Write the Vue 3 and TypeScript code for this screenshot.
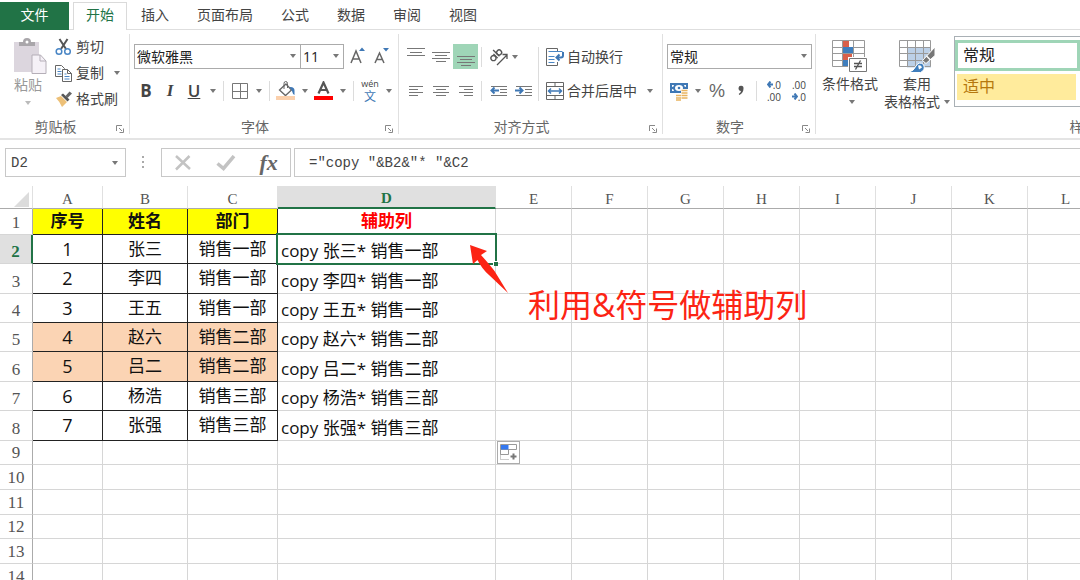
<script setup lang="ts">
import { ref } from 'vue'

interface Column { name: string; width: number }
interface Row { n: number; height: number; cells: string[]; highlight?: boolean }

const tabs: string[] = ['开始', '插入', '页面布局', '公式', '数据', '审阅', '视图']
const activeTab = ref('开始')
const cellName = ref('D2')
const formula = ref('="copy "&B2&"* "&C2')

const columns: Column[] = [
  { name: 'A', width: 70 },
  { name: 'B', width: 85 },
  { name: 'C', width: 90 },
  { name: 'D', width: 218 },
  ...['E', 'F', 'G', 'H', 'I', 'J', 'K', 'L'].map((name) => ({ name, width: 76 })),
]

const person = (no: string, name: string, dept: string): string[] => [no, name, dept, `copy ${name}* ${dept}`]

const rows: Row[] = [
  { n: 1, height: 26, cells: ['序号', '姓名', '部门', '辅助列'] },
  { n: 2, height: 29, cells: person('1', '张三', '销售一部') },
  { n: 3, height: 30, cells: person('2', '李四', '销售一部') },
  { n: 4, height: 29, cells: person('3', '王五', '销售一部') },
  { n: 5, height: 29, cells: person('4', '赵六', '销售二部'), highlight: true },
  { n: 6, height: 30, cells: person('5', '吕二', '销售二部'), highlight: true },
  { n: 7, height: 29, cells: person('6', '杨浩', '销售三部') },
  { n: 8, height: 30, cells: person('7', '张强', '销售三部') },
  { n: 9, height: 24, cells: [] },
  { n: 10, height: 25, cells: [] },
  { n: 11, height: 25, cells: [] },
  { n: 12, height: 24, cells: [] },
  { n: 13, height: 25, cells: [] },
  { n: 14, height: 25, cells: [] },
]

function cellClass(row: Row, c: number): Record<string, boolean> {
  return {
    boxed: row.n <= 8 && c < 3,
    title: row.n === 1 && c < 3,
    helper: row.n === 1 && c === 3,
    digit: row.n > 1 && c === 0,
    copy: row.n > 1 && c === 3,
    peach: !!row.highlight && c < 3,
    selected: row.n === 2 && c === 3,
  }
}
</script>

<template>
  <div class="app">
    <nav class="tabs">
      <button class="tab file">文件</button>
      <button
        v-for="t in tabs"
        :key="t"
        class="tab"
        :class="{ active: t === activeTab }"
        @click="activeTab = t"
      >{{ t }}</button>
    </nav>

    <div class="ribbon">
      <section class="group clipboard">
        <div class="body">
          <button class="big paste">
            <svg width="34" height="38" viewBox="0 0 34 38">
              <rect x="1" y="4" width="25" height="30" fill="#dcd6de" />
              <path d="M6 8V4h4q0-4 4-4t4 4h4v4z" fill="#a9a6aa" />
              <circle cx="14" cy="4" r="1.5" fill="#fff" />
              <path d="M19 17h8.500l5.500 6v12.500H19z" fill="#f5f1f7" stroke="#b5afb8" />
              <path d="M27 17v6h6" fill="none" stroke="#b5afb8" />
            </svg>
            <span>粘贴</span>
            <i class="caret"></i>
          </button>
          <div class="stack">
            <button class="item">
              <svg width="18" height="18" viewBox="0 0 18 18">
                <path d="M4.500 1l6.500 10M12.500 1L6 11" stroke="#555" stroke-width="2" fill="none" />
                <circle cx="4" cy="13.500" r="2.800" fill="none" stroke="#4a86c5" stroke-width="1.500" />
                <circle cx="12.500" cy="13.500" r="2.800" fill="none" stroke="#4a86c5" stroke-width="1.500" />
              </svg>
              <span>剪切</span>
            </button>
            <button class="item">
              <svg width="18" height="18" viewBox="0 0 18 18">
                <path d="M.5 1.500h6l3 3v8h-9z" fill="#fff" stroke="#666" />
                <path d="M2.500 5h3M2.500 7.500h4M2.500 10h4" stroke="#4a86c5" />
                <path d="M7.500 5.500h5l4 4v8h-9z" fill="#fff" stroke="#666" />
                <path d="M12.500 5.500v4h4" fill="none" stroke="#666" />
                <path d="M9.500 10h2M9.500 12.500h5M9.500 15h5" stroke="#4a86c5" />
              </svg>
              <span>复制</span>
              <i class="caret"></i>
            </button>
            <button class="item">
              <svg width="18" height="18" viewBox="0 0 18 18">
                <path d="M1 8l5-2 6 6-5 5q-2-5-6-9z" fill="#edc078" />
                <path d="M6 5l2-1.500 6.500 6-2 2z" fill="#555" />
                <path d="M10.500 6l4-4.500 2.500 2-4.500 4.500z" fill="#666" />
              </svg>
              <span>格式刷</span>
            </button>
          </div>
        </div>
        <footer>剪贴板<svg class="launch" viewBox="0 0 8 8"><path d="M.5 6V.5H6M3 3l3 3M7.500 3.500v4h-4" /></svg></footer>
      </section>

      <section class="group font">
        <div class="body rows">
          <div class="line">
            <label class="combo family"><select aria-label="字体"><option>微软雅黑</option></select><i class="caret"></i></label>
            <label class="combo size"><select aria-label="字号"><option>11</option></select><i class="caret"></i></label>
            <button class="tool grow" aria-label="增大字号">
              <svg width="24" height="24" viewBox="0 0 24 24"><path d="M5 18l5-12 5 12M7 14h6" class="glyph" /><path d="M13 6l3-3.500L19 6z" fill="#3f78b5" /></svg>
            </button>
            <button class="tool" aria-label="减小字号">
              <svg width="24" height="24" viewBox="0 0 24 24"><path d="M5 18l4.500-10L14 18M7 14.500h5" class="glyph" /><path d="M13 3l3 3.500L19 3z" fill="#3f78b5" /></svg>
            </button>
          </div>
          <div class="line">
            <button class="tool letter"><b>B</b></button>
            <button class="tool letter italic">I</button>
            <button class="tool letter"><u>U</u></button>
            <button class="drop" aria-label="下划线选项"><i class="caret"></i></button>
            <i class="sep"></i>
            <button class="tool" aria-label="边框">
              <svg width="18" height="18" viewBox="0 0 18 18"><path d="M1.500 1.500h15v15h-15zM9.500 1.500v15M1.500 9.500h15" fill="none" stroke="#777" /></svg>
            </button>
            <button class="drop" aria-label="边框选项"><i class="caret"></i></button>
            <i class="sep"></i>
            <button class="tool" aria-label="填充颜色">
              <svg width="20" height="20" viewBox="0 0 20 20">
                <path d="M3.500 9L10 3l5.500 6-6 5.500z" fill="#fff" stroke="#666" stroke-width="1.300" />
                <path d="M8 8V2.500Q8 .5 9.700.5t1.800 2V7" fill="none" stroke="#666" />
                <path d="M13.500 6q5-.5 5 3.500v4.500q-2-1-2.500-4z" fill="#3f78b5" />
                <rect y="15" width="19" height="4" fill="#fbd0ac" />
              </svg>
            </button>
            <button class="drop" aria-label="填充颜色选项"><i class="caret"></i></button>
            <button class="tool" aria-label="字体颜色">
              <svg width="20" height="20" viewBox="0 0 20 20"><path d="M4.500 12.500l5-11 5 11M6.500 9h6" fill="none" stroke="#555" stroke-width="2.200" /><rect y="15" width="19" height="4" fill="#f00" /></svg>
            </button>
            <button class="drop" aria-label="字体颜色选项"><i class="caret"></i></button>
            <i class="sep"></i>
            <button class="tool phonetic"><span>wén</span><span class="han">文</span></button>
            <button class="drop" aria-label="拼音选项"><i class="caret"></i></button>
          </div>
        </div>
        <footer>字体<svg class="launch" viewBox="0 0 8 8"><path d="M.5 6V.5H6M3 3l3 3M7.500 3.500v4h-4" /></svg></footer>
      </section>

      <section class="group align">
        <div class="body">
          <div class="rows">
            <div class="line">
              <button class="cell" aria-label="顶端对齐"><svg width="18" height="18" viewBox="0 0 18 18"><path d="M0 .5h18M3 4.500h12M0 7.500h18" class="bars" /></svg></button>
              <button class="cell" aria-label="垂直居中"><svg width="18" height="18" viewBox="0 0 18 18"><path d="M0 4.500h18M3 7.500h12M0 10.500h18M4 13.500h10" class="bars" /></svg></button>
              <button class="cell on" aria-label="底端对齐"><svg width="18" height="18" viewBox="0 0 18 18"><path d="M0 8.500h18M3 11.500h12M0 14.500h18M4 17.500h10" class="bars" /></svg></button>
              <i class="sep"></i>
              <button class="cell" aria-label="方向">
                <svg width="20" height="20" viewBox="0 0 20 20">
                  <g transform="rotate(-45 8 9)" fill="none" stroke="#555" stroke-width="1.400"><circle cx="4" cy="8" r="2.500" /><path d="M7 5v6M9.500 2V11" /><circle cx="12" cy="8" r="2.500" /></g>
                  <path d="M8 18l10-10M13.500 7.500H18v4.500" fill="none" stroke="#555" stroke-width="1.300" />
                </svg>
              </button>
              <button class="drop near" aria-label="方向选项"><i class="caret"></i></button>
            </div>
            <div class="line">
              <button class="cell" aria-label="左对齐"><svg width="14" height="12" viewBox="0 0 14 12"><path d="M0 1.500h14M0 4.500h9M0 7.500h14M0 10.500h9" class="bars" /></svg></button>
              <button class="cell" aria-label="居中"><svg width="16" height="12" viewBox="0 0 16 12"><path d="M0 1.500h16M3 4.500h10M0 7.500h16M3 10.500h10" class="bars" /></svg></button>
              <button class="cell" aria-label="右对齐"><svg width="14" height="12" viewBox="0 0 14 12"><path d="M0 1.500h14M5 4.500h9M0 7.500h14M5 10.500h9" class="bars" /></svg></button>
              <i class="sep"></i>
              <button class="cell" aria-label="减少缩进"><svg width="18" height="12" viewBox="0 0 18 12"><path d="M1 1.500h16M10 4.500h7M10 7.500h7M1 10.500h16" class="bars" /><path d="M4.500 2.500L1.500 5.500l3 3M1.500 5.500H9" class="arrow" /></svg></button>
              <button class="cell" aria-label="增加缩进"><svg width="18" height="12" viewBox="0 0 18 12"><path d="M1 1.500h16M10 4.500h7M10 7.500h7M1 10.500h16" class="bars" /><path d="M4.500 2.500l3 3-3 3M7.500 5.500H0" class="arrow" /></svg></button>
            </div>
          </div>
          <i class="rule"></i>
          <div class="rows">
            <div class="line">
              <button class="item">
                <svg width="18" height="18" viewBox="0 0 18 18">
                  <path d="M11.500 3v-2.500h-11v17h11V14" fill="none" stroke="#666" />
                  <path d="M2.500 3.500h14M2.500 8.500h6M2.500 11.500h6M2.500 14.500h6" stroke="#4a86c5" />
                  <path d="M17 4v3.500q0 2-2 2h-4M13.500 6.500l-3 3 3 3" fill="none" stroke="#3f78b5" stroke-width="2" />
                </svg>
                <span>自动换行</span>
              </button>
            </div>
            <div class="line">
              <button class="item">
                <svg width="18" height="18" viewBox="0 0 18 18">
                  <path d="M.5.5h17v17H.5zM.5 4.500h17M.5 13.500h17M9 .5v4M9 13.500v4" fill="none" stroke="#666" />
                  <path d="M5 6.500L2.500 9 5 11.500M13 6.500L15.500 9 13 11.500M2.500 9h13" fill="none" stroke="#3f78b5" stroke-width="1.500" />
                </svg>
                <span>合并后居中</span>
                <i class="caret"></i>
              </button>
            </div>
          </div>
        </div>
        <footer>对齐方式<svg class="launch" viewBox="0 0 8 8"><path d="M.5 6V.5H6M3 3l3 3M7.500 3.500v4h-4" /></svg></footer>
      </section>

      <section class="group number">
        <div class="body rows">
          <div class="line">
            <label class="combo format"><select aria-label="数字格式"><option>常规</option></select><i class="caret"></i></label>
          </div>
          <div class="line">
            <button class="tool" aria-label="会计数字格式">
              <svg width="20" height="20" viewBox="0 0 20 20">
                <path d="M1 2h18v10H1z" fill="#3f78b5" />
                <path d="M3 4h2q0 2-2 2zM17 4h-2q0 2 2 2zM3 10h2q0-2-2-2z" fill="#fff" />
                <ellipse cx="10" cy="7" rx="4" ry="3" fill="#fff" /><circle cx="10" cy="7" r="1.300" fill="#3f78b5" />
                <path d="M12 8h7v10h-5v1.500H6.500V14H12z" fill="#fff" />
                <path d="M12.500 9.500h6M12.500 12h6M12.500 14.500h6M12.500 17h6M7 14.500h5M7 17h5M7 19h5" stroke="#e9b45f" stroke-width="1.700" />
              </svg>
            </button>
            <button class="drop" aria-label="货币选项"><i class="caret"></i></button>
            <button class="tool percent">%</button>
            <button class="tool" aria-label="千位分隔样式"><svg width="8" height="12" viewBox="0 0 8 12"><path d="M1.500 3a2.500 2.500 0 1 1 5 .5q0 4-4 6.500l-.8-1Q4 7.500 4 6Q1.500 6 1.500 3z" fill="#555" /></svg></button>
            <i class="sep"></i>
            <button class="cell decimal"><span><svg width="6" height="7" viewBox="0 0 6 7"><path d="M3.500.5L1 3.500l2.500 3M1 3.500h5" class="arrow" /></svg>.0</span><span>.00</span></button>
            <button class="cell decimal"><span>.00</span><span><svg width="6" height="7" viewBox="0 0 6 7"><path d="M2.500.5L5 3.500l-2.500 3M5 3.500H0" class="arrow" /></svg>.0</span></button>
          </div>
        </div>
        <footer>数字<svg class="launch" viewBox="0 0 8 8"><path d="M.5 6V.5H6M3 3l3 3M7.500 3.500v4h-4" /></svg></footer>
      </section>

      <section class="group styles">
        <div class="body">
          <button class="big cond">
            <svg width="36" height="33" viewBox="0 0 36 33">
              <path d="M.5.500h32v26H.5z" fill="#fff" />
              <path d="M.5.500h32v26H.5zM.5 7.500h32M.5 13.500h32M.5 20.500h32M10.500.5v26M21.500.5v26" fill="none" stroke="#999" />
              <path d="M11 1h6v6h-6zM11 14h9v6h-9z" fill="#d9604a" />
              <path d="M11 7h10v6H11zM11 20h5v6h-5z" fill="#3f7ebd" />
              <path d="M16 17h20v16H16z" fill="#fff" />
              <path d="M17.500 18.500h17v13h-17z" fill="#fff" stroke="#777" />
              <path d="M22 23.500h8M22 26.500h8M28.500 20.500l-5 9" fill="none" stroke="#555" stroke-width="1.300" />
            </svg>
            <span>条件格式</span>
            <i class="caret"></i>
          </button>
          <button class="big fmt">
            <svg width="36" height="33" viewBox="0 0 36 33">
              <path d="M.5.5h31v26H.5z" fill="#fff" />
              <path d="M8 7.500h24v20H8z" fill="#bcd0e7" />
              <path d="M.5.500h31v26H.5zM.5 7.500h31M.5 13.500h31M.5 20.500h31M8.500.5v26M16.500.5v26M24.500.5v26" fill="none" stroke="#999" />
              <path d="M36 7v8.500L27 23.500l-3.500-3z" fill="#777" stroke="#fff" />
              <path d="M27.500 16l4 4" stroke="#fff" stroke-width="1.500" />
              <path d="M9 32.500q6-1.500 8-6.500 3-5 7.500-1.500 2.500 5.500-3 8z" fill="#3f7ebd" stroke="#fff" />
              <path d="M19 25.500q3-1 4 2l-3 2z" fill="#fff" />
            </svg>
            <span>套用</span>
            <span class="with-caret">表格格式<i class="caret"></i></span>
          </button>
          <div class="gallery">
            <button class="style normal">常规</button>
            <button class="style neutral">适中</button>
          </div>
        </div>
        <footer>样式</footer>
      </section>
    </div>

    <div class="formula-bar">
      <div class="name-box">
        <input v-model="cellName" aria-label="名称框">
        <button aria-label="名称列表"><i class="caret"></i></button>
      </div>
      <svg class="dots" width="3" height="13" viewBox="0 0 3 13"><path d="M0 0h2v2H0zM0 5h2v2H0zM0 10h2v2H0z" fill="#aaa" /></svg>
      <div class="actions">
        <button aria-label="取消"><svg width="18" height="16" viewBox="0 0 18 16"><path d="M2 1l14 13M15.500 1L2 14.500" fill="none" stroke="#c3c3c3" stroke-width="2.500" /></svg></button>
        <button aria-label="输入"><svg width="20" height="16" viewBox="0 0 20 16"><path d="M1.500 8.500l6 5L18 1" fill="none" stroke="#c3c3c3" stroke-width="3.500" /></svg></button>
        <button class="fx">fx</button>
      </div>
      <input v-model="formula" class="formula" aria-label="编辑栏">
    </div>

    <main class="sheet">
      <table>
        <colgroup>
          <col class="head-col">
          <col v-for="c in columns" :key="c.name" :style="{ width: c.width + 'px' }">
        </colgroup>
        <thead>
          <tr>
            <th class="corner"><svg width="15" height="15" viewBox="0 0 15 15"><path d="M15 0v15H0z" fill="#dcdcdc" /></svg></th>
            <th v-for="c in columns" :key="c.name" scope="col" :class="{ current: c.name === 'D' }">{{ c.name }}</th>
          </tr>
        </thead>
        <tbody>
          <tr v-for="r in rows" :key="r.n" :style="{ height: r.height + 'px' }">
            <th scope="row" :class="{ current: r.n === 2 }">{{ r.n }}</th>
            <td v-for="(c, i) in columns" :key="c.name" :class="cellClass(r, i)">{{ r.cells[i] }}</td>
          </tr>
        </tbody>
      </table>
      <svg class="pointer" width="42" height="52" viewBox="0 0 42 52"><path d="M2 2l17 6-6 4q9 10 13.500 16L40 50 21 32Q14 26 9.500 17L5 21z" fill="#fc2414" /></svg>
      <p class="note">利用&amp;符号做辅助列</p>
      <button class="autofill" aria-label="自动填充选项">
        <svg width="17" height="17" viewBox="0 0 17 17">
          <path d="M.5.500h16v5H.5zM.5 5.500h8v5h-8z" fill="#fff" stroke="#999" />
          <path d="M1 1h7.500v4.500H1z" fill="#3478f0" />
          <path d="M.5 10.500v5h8" fill="none" stroke="#999" stroke-dasharray="1 1" />
          <path d="M13.500 9.500v6M10.500 12.500h6" stroke="#777" stroke-width="2" />
        </svg>
      </button>
    </main>
  </div>
</template>

<style>
body {
  margin: 0;
  overflow: hidden;
}
</style>

<style scoped>
.app {
  height: 100vh;
  overflow: hidden;
  display: flex;
  flex-direction: column;
  background: #fff;
  color: #444;
  font: 14px/18px "Open Sans", "Noto Sans CJK SC", sans-serif;
}
button, input, select {
  font: inherit;
  color: inherit;
  background: none;
  border: 0;
  padding: 0;
  margin: 0;
  border-radius: 0;
  outline: none;
  white-space: nowrap;
}
svg { display: block; flex: none; }
.caret {
  width: 0;
  border: 3px solid transparent;
  border-top: 4px solid #777;
  border-bottom: 0;
  flex: none;
}

/* tabs */
.tabs {
  display: flex;
  flex: none;
  height: 28px;
  padding-top: 2px;
  box-shadow: inset 0 -1px #dedede;
}
.tab { padding: 0 14px 2px; }
.tab.file {
  width: 69px;
  margin-right: 4px;
  background: #217346;
  color: #fff;
}
.tab.active {
  padding: 0 12px 3px;
  border: 1px solid #dadada;
  border-bottom: 0;
  background: #fff;
  color: #217346;
}

/* ribbon */
.ribbon {
  display: flex;
  flex: none;
  height: 104px;
  padding-top: 4px;
  border-bottom: 2px solid #e4e4e4;
}
.group {
  flex: none;
  box-sizing: border-box;
  height: 100px;
  display: flex;
  flex-direction: column;
  border-right: 1px solid #e0e0e0;
}
.clipboard { width: 130px; }
.font { width: 269px; }
.align { width: 264px; }
.number { width: 153px; }
.styles { width: 536px; }
.body { flex: 1; display: flex; }
.group footer {
  position: relative;
  height: 16px;
  line-height: 18px;
  text-align: center;
  padding-right: 18px;
  color: #666;
}
.styles footer { padding-right: 0; }
.launch {
  position: absolute;
  right: 5px;
  bottom: 1px;
  width: 8px;
  height: 8px;
  fill: none;
  stroke: #888;
}
.rows { display: flex; flex-direction: column; gap: 9px; padding-top: 10px; }
.rows .rows { padding-top: 0; }
.line { display: flex; align-items: center; height: 25px; }
.sep { width: 1px; height: 20px; margin: 0 4px 0 3px; background: #dcdcdc; flex: none; }
.rule { width: 1px; height: 54px; margin: 13px 7px 0 2px; background: #dcdcdc; }
.tool, .cell, .drop {
  display: flex;
  align-items: center;
  justify-content: center;
  height: 25px;
  flex: none;
}
.tool { width: 24px; }
.cell { width: 25px; }
.drop { width: 14px; }
.drop.near { width: 8px; }
.cell.on { background: #9fd5b7; }
.bars { stroke: #777; fill: none; }
.arrow { stroke: #3f78b5; stroke-width: 2; fill: none; }
.glyph { stroke: #666; stroke-width: 1.500; fill: none; }

.big {
  display: flex;
  flex-direction: column;
  align-items: center;
}
.big svg { margin-bottom: 2px; }
.big > .caret { margin-top: 7px; }
.paste { width: 42px; margin-left: 7px; padding-top: 4px; color: #999; }
.paste .caret { border-top-color: #bbb; }
.paste svg { margin-left: 4px; margin-bottom: 0; }
.stack { display: flex; flex-direction: column; margin-left: 6px; }
.item { display: flex; align-items: center; gap: 3px; height: 26px; }
.item .caret { margin-left: 7px; }

.font .body, .number .body { padding-left: 4px; }
.align .body { padding-left: 4px; }
.combo { position: relative; display: flex; }
.combo select {
  appearance: none;
  box-sizing: border-box;
  width: 100%;
  height: 25px;
  padding-left: 2px;
  border: 1px solid #ababab;
  background: #fff;
  color: #222;
}
.combo .caret { position: absolute; right: 5px; top: 10px; pointer-events: none; }
.family { width: 167px; }
.size { width: 44px; margin-left: -1px; }
.format { width: 145px; }
.grow { margin-left: 2px; }
.letter { font: 17px/24px "Open Sans", sans-serif; font-weight: 600; color: #444; }
.letter b { font-weight: 700; }
.letter.italic { font-family: "Liberation Serif", serif; font-style: italic; font-weight: 700; }
.phonetic { flex-direction: column; font-size: 9px; line-height: 12px; }
.phonetic .han { font-size: 12px; line-height: 13px; color: #3f78b5; }
.percent { font: 18px/24px "Liberation Sans", sans-serif; color: #666; }
.decimal { flex-direction: column; align-items: flex-end; padding-right: 5px; font: 10px/12px "Open Sans", sans-serif; }
.decimal span { display: flex; align-items: center; }

.cond { width: 68px; padding-top: 6px; }
.cond .caret { margin-left: 3px; }
.fmt { width: 66px; padding-top: 6px; }
.with-caret { display: flex; align-items: center; gap: 4px; }
.gallery {
  flex: 1;
  height: 69px;
  margin: 2px 0 0 4px;
  border: 1px solid #a9b0b5;
}
.style {
  display: block;
  box-sizing: border-box;
  width: 125px;
  text-align: left;
  font-size: 16px;
}
.normal { height: 31px; margin-top: 3px; padding: 0 0 2px 5px; border: 3px solid #9fd5b7; color: #222; }
.neutral { width: 119px; height: 26px; margin: 3px 0 0 2px; padding: 0 0 2px 6px; background: #ffeb9c; color: #b5780e; }

/* formula bar */
.formula-bar {
  display: flex;
  align-items: center;
  flex: none;
  height: 29px;
  margin: 8px 0 9px 5px;
  font: 14px/20px "Liberation Mono", "Noto Sans CJK SC", monospace;
}
.name-box, .actions, .formula {
  box-sizing: border-box;
  height: 29px;
  border: 1px solid #c8c8c8;
}
.name-box { display: flex; width: 121px; }
.name-box input { flex: 1; min-width: 0; padding-left: 5px; }
.name-box button { width: 20px; display: flex; align-items: center; justify-content: center; }
.dots { margin: 0 16px; }
.actions { display: flex; width: 130px; margin-right: 3px; }
.actions button { flex: 1; display: flex; align-items: center; justify-content: center; }
.actions .fx { font: italic 22px/24px "Liberation Serif", serif; font-weight: 700; color: #666; }
.formula { flex: 1; min-width: 0; padding-left: 14px; border-right: 0; }

/* sheet */
.sheet { position: relative; flex: 1; min-height: 0; overflow: hidden; }
table { table-layout: fixed; width: 1104px; border-collapse: separate; border-spacing: 0; }
.head-col { width: 33px; }
th, td {
  box-sizing: border-box;
  padding: 0;
  border-right: 1px solid #d6d6d6;
  border-bottom: 1px solid #d6d6d6;
  white-space: nowrap;
  overflow: hidden;
}
thead tr { height: 23px; }
thead th {
  padding-top: 3px;
  border-bottom-color: #ababab;
  border-right-color: #e0e0e0;
  font: 15px/18px "Liberation Serif", serif;
  color: #555;
}
thead .current {
  background: #e0e0e0;
  color: #217346;
  font-weight: 700;
  border-bottom: 2px solid #217346;
}
.corner svg { margin: 1px 0 0 14px; }
tbody th {
  vertical-align: bottom;
  border-right-color: #ababab;
  font: 17px/22px "Liberation Serif", serif;
  color: #555;
}
tbody .current {
  background: #e0e0e0;
  color: #217346;
  font-weight: 700;
  border-right: 2px solid #217346;
}
td {
  text-align: center;
  font-size: 17px;
  line-height: 24px;
  color: #111;
}
.boxed { border-color: #222; padding-bottom: 1px; }
.digit { font-size: 18px; }
.title, .helper { font-weight: 700; vertical-align: bottom; }
.title { background: #ff0; }
.helper { color: #f00; padding-bottom: 1px; }
.peach { background: #fbd4b4; }
.copy { text-align: left; vertical-align: bottom; padding-left: 3px; }
.selected { position: relative; overflow: visible; }
.selected::before {
  content: "";
  position: absolute;
  inset: -2px;
  border: 2px solid #217346;
}
.selected::after {
  content: "";
  position: absolute;
  right: -3px;
  bottom: -3px;
  width: 4px;
  height: 4px;
  background: #217346;
  border: 1px solid #fff;
  border-right: 0;
  border-bottom: 0;
}
.pointer { position: absolute; left: 468px; top: 57px; }
.note {
  position: absolute;
  left: 528px;
  top: 99px;
  margin: 0;
  font-size: 32px;
  line-height: 40px;
  white-space: nowrap;
  color: #fc2414;
}
.autofill {
  position: absolute;
  left: 497px;
  top: 255px;
  box-sizing: border-box;
  width: 23px;
  height: 23px;
  display: flex;
  align-items: center;
  justify-content: center;
  border: 1px solid #ababab;
  background: #fff;
}
</style>
